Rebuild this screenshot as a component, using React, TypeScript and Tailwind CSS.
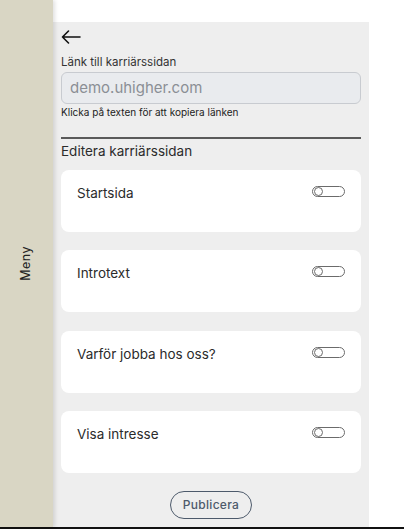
import React from "react";

const sections = ["Startsida", "Introtext", "Varför jobba hos oss?", "Visa intresse"];

function Toggle() {
  return (
    <span className="mt-[3px] flex h-[11px] w-[33px] items-center rounded-full border border-[#6b6b6b] bg-white px-[1px]">
      <span className="h-[9px] w-[9px] rounded-full border border-[#6b6b6b]" />
    </span>
  );
}

function SectionCard({ title }: { title: string }) {
  return (
    <div className="flex h-[62px] items-start justify-between rounded-[8px] bg-white pl-[16px] pr-[16px] pt-[13px]">
      <span className="text-[13.5px] leading-[20px] text-[#2b2b2b]">{title}</span>
      <Toggle />
    </div>
  );
}

export default function App() {
  return (
    <div
      className="flex h-[529px] w-[404px] flex-col overflow-hidden bg-white"
      style={{ fontFamily: "Inter, 'Noto Sans', sans-serif" }}
    >
      <div className="flex h-[527px]">
        <aside className="relative z-10 flex w-[53px] shrink-0 items-center justify-center bg-[#d9d6c4] shadow-[2px_0_4px_rgba(0,0,0,0.12)]">
          <span className="-rotate-90 whitespace-nowrap text-[12.5px] tracking-[0.5px] text-[#222]">Meny</span>
        </aside>
        <div className="flex flex-col pt-[22px]">
          <main className="flex w-[316px] flex-1 flex-col bg-[#eeeeee] px-[8px]">
            <button type="button" className="mt-[7px] flex h-[16px] w-[22px] items-center" aria-label="Tillbaka">
              <svg width="20" height="14" viewBox="0 0 20 14" fill="none" stroke="#111" strokeWidth="1.6" strokeLinecap="round" strokeLinejoin="round">
                <path d="M19 7H1.5M7.5 1L1.5 7l6 6" />
              </svg>
            </button>
            <p className="mt-[9px] text-[11.5px] leading-[16px] text-[#333]">Länk till karriärssidan</p>
            <div className="mt-[2px] flex h-[32px] items-center rounded-[6px] border border-[#c8cbd0] bg-[#e9ebee] px-[8px] text-[15px] text-[#8b8f95]">
              demo.uhigher.com
            </div>
            <p className="mt-[1px] text-[10px] leading-[14px] text-[#222]">Klicka på texten för att kopiera länken</p>
            <div className="mt-[18px] h-[1.5px] bg-[#5a5a5a]" />
            <h2 className="mt-[2px] text-[13.5px] leading-[20px] text-[#2b2b2b]">Editera karriärssidan</h2>
            <div className="mt-[9px] flex flex-col gap-[18.5px]">
              {sections.map((s) => (
                <SectionCard key={s} title={s} />
              ))}
            </div>
            <div className="mt-[18px] flex justify-center">
              <button
                type="button"
                className="h-[28px] w-[82px] rounded-full border-[1.5px] border-[#4d5a6b] text-[12px] font-medium tracking-[0.3px] text-[#4d5a6b]"
              >
                Publicera
              </button>
            </div>
          </main>
        </div>
      </div>
      <div className="h-[2px] bg-[#111]" />
    </div>
  );
}
